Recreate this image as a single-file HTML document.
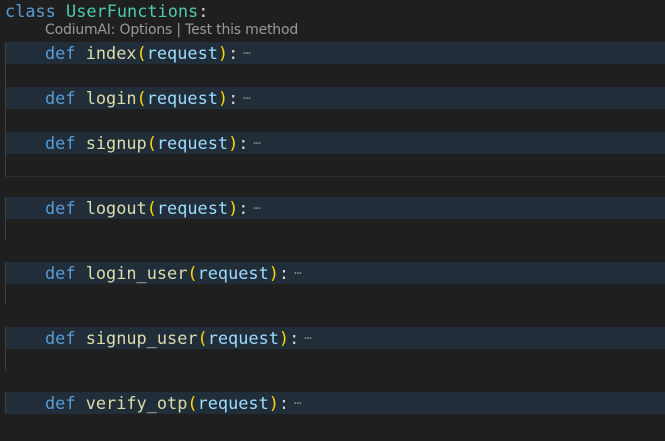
<!DOCTYPE html>
<html><head><style>
body{margin:0;width:665px;height:441px;background:#1f1f1f;overflow:hidden;position:relative;font-family:"DejaVu Sans Mono","Liberation Mono",monospace;font-size:16.9px}
.band{position:absolute;left:5px;right:0;height:22px;background:#212d39}
.g{position:absolute;left:5px;width:1px;background:#404040}
.l{position:absolute;left:45px;white-space:pre;line-height:22px;height:22px}
.k{color:#569cd6}.f{color:#dcdcaa}.p{color:#ffd700}.r{color:#9cdcfe}.c{color:#d4d4d4}.e{color:#8a8a8a;font-size:12px;vertical-align:2px;margin-left:5px}
</style></head><body>
<div style="position:absolute;left:5px;top:0px;line-height:22px;white-space:pre"><span class="k">class</span> <span style="color:#4ec9b0">UserFunctions</span><span class="c">:</span></div>
<div style="position:absolute;left:45px;top:22px;font-family:'DejaVu Sans','Liberation Sans',sans-serif;font-size:14px;color:#999;letter-spacing:-0.2px">CodiumAI: Options | Test this method</div>
<div class="band" style="top:42px"></div>
<div class="band" style="top:87px"></div>
<div class="band" style="top:132px"></div>
<div class="band" style="top:197px"></div>
<div class="band" style="top:262px"></div>
<div class="band" style="top:327px"></div>
<div class="band" style="top:392px"></div>
<div class="g" style="top:42px;height:135px"></div>
<div style="position:absolute;left:5px;right:0;top:176px;height:1px;background:#2e2e2e"></div>
<div class="g" style="top:197px;height:43px"></div>
<div class="g" style="top:262px;height:43px"></div>
<div class="g" style="top:327px;height:43px"></div>
<div class="g" style="top:392px;height:22px"></div>
<div class="l" style="top:42px"><span class="k">def</span> <span class="f">index</span><span class="p">(</span><span class="r">request</span><span class="p">)</span><span class="c">:</span><span class="e">⋯</span></div>
<div class="l" style="top:87px"><span class="k">def</span> <span class="f">login</span><span class="p">(</span><span class="r">request</span><span class="p">)</span><span class="c">:</span><span class="e">⋯</span></div>
<div class="l" style="top:132px"><span class="k">def</span> <span class="f">signup</span><span class="p">(</span><span class="r">request</span><span class="p">)</span><span class="c">:</span><span class="e">⋯</span></div>
<div class="l" style="top:197px"><span class="k">def</span> <span class="f">logout</span><span class="p">(</span><span class="r">request</span><span class="p">)</span><span class="c">:</span><span class="e">⋯</span></div>
<div class="l" style="top:262px"><span class="k">def</span> <span class="f">login_user</span><span class="p">(</span><span class="r">request</span><span class="p">)</span><span class="c">:</span><span class="e">⋯</span></div>
<div class="l" style="top:327px"><span class="k">def</span> <span class="f">signup_user</span><span class="p">(</span><span class="r">request</span><span class="p">)</span><span class="c">:</span><span class="e">⋯</span></div>
<div class="l" style="top:392px"><span class="k">def</span> <span class="f">verify_otp</span><span class="p">(</span><span class="r">request</span><span class="p">)</span><span class="c">:</span><span class="e">⋯</span></div>
</body></html>
